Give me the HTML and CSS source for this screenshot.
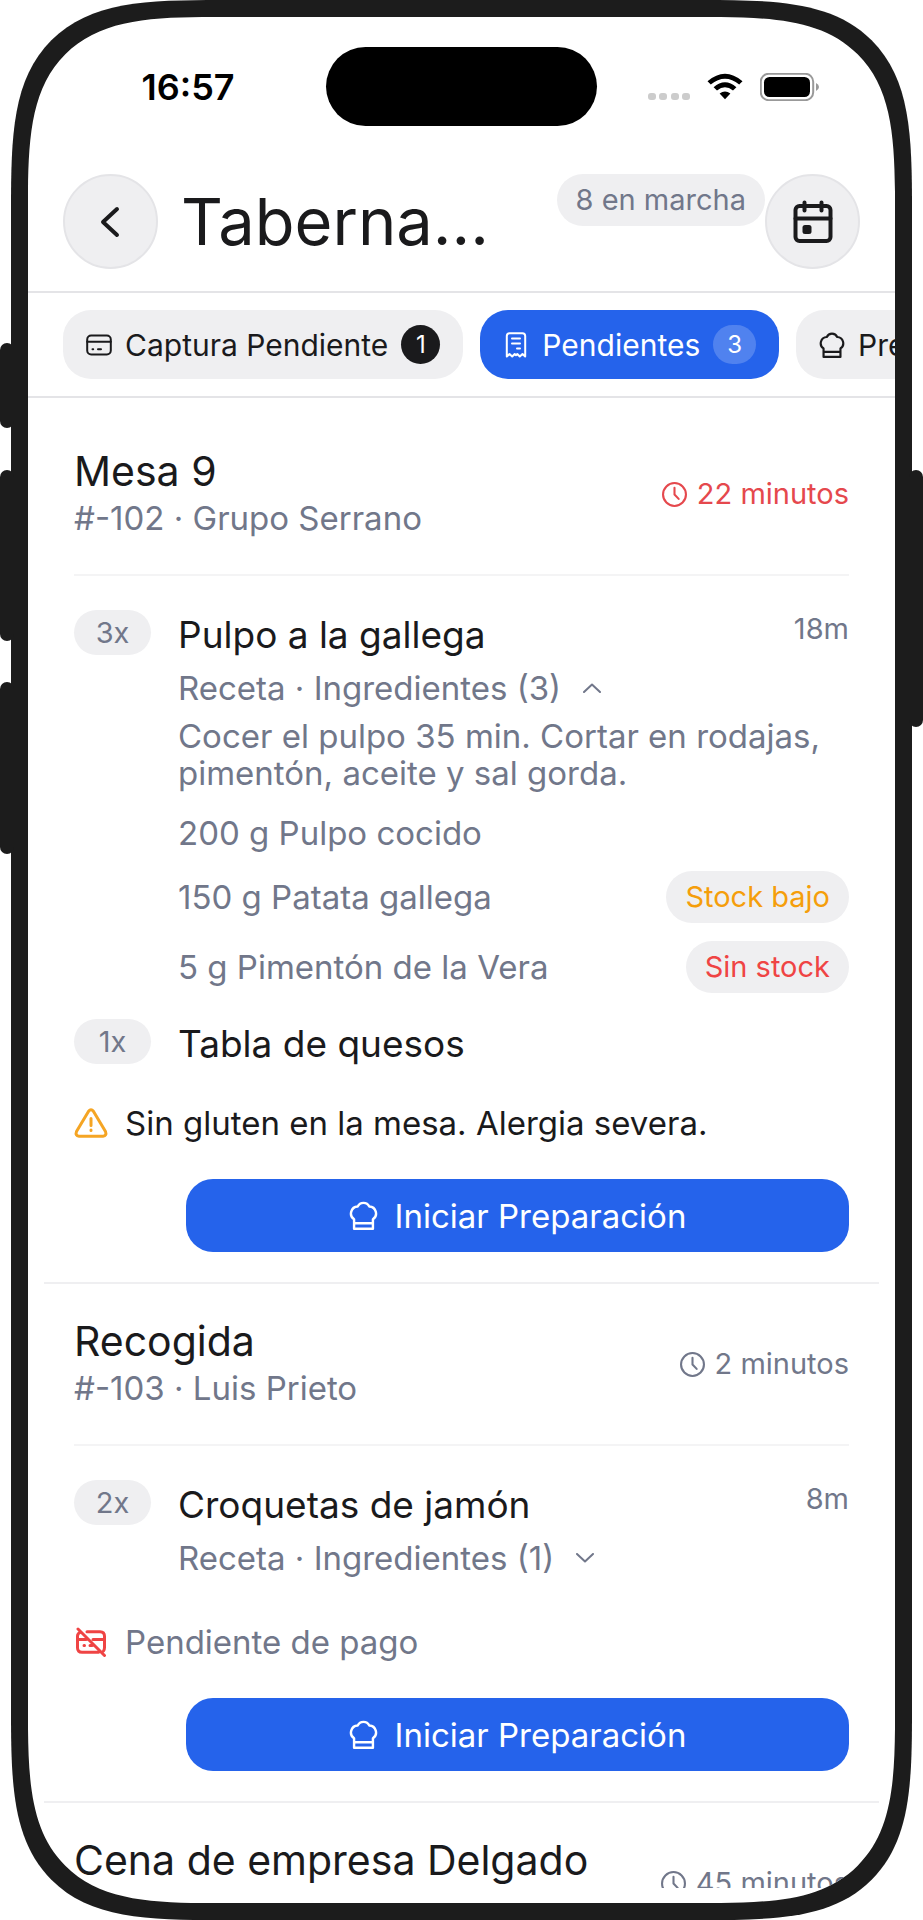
FILE: index.html
```html
<!DOCTYPE html>
<html lang="es">
<head>
	<meta charset="utf-8" />
	<meta name="viewport" content="width=device-width, initial-scale=1" />
	<title>Taberna - Pedidos</title>
	<link rel="stylesheet" href="styles.css">
</head>
<body>
	<!-- shared icons -->
	<svg class="sprite" aria-hidden="true">
		<symbol id="i-hat" viewBox="0 0 24 24">
			<path d="M4.2 15.2A5.8 5.8 0 0 1 7.2 4.6A5.3 5.3 0 0 1 16.8 4.6A5.8 5.8 0 0 1 19.8 15.2V23H4.2ZM4.2 18.4H19.8" />
		</symbol>
		<symbol id="i-clock" viewBox="0 0 24 24">
			<circle cx="12" cy="12" r="11" /><path d="M12 5.5V12L16 16.2" />
		</symbol>
	</svg>

	<div class="device">
		<span class="side side-mute"></span>
		<span class="side side-up"></span>
		<span class="side side-down"></span>
		<span class="side side-power"></span>

		<div class="screen">
			<div class="status">
				<span class="status-time">16:57</span>
				<span class="island"></span>
				<span class="status-icons">
					<svg width="42" height="8" viewBox="0 0 42 8" class="dots"><rect width="8" height="7" rx="3" /><rect x="11" width="8" height="7" rx="3" /><rect x="23" width="8" height="7" rx="3" /><rect x="34" width="8" height="7" rx="3" /></svg>
					<svg width="36" height="27" viewBox="0 0 36 27"><path d="M.5 8.2Q18-6.8 35.5 8.2L32.2 11.5Q18-.2 3.8 11.5Z" /><path d="M6.6 14.2Q18 4.4 29.4 14.2L26 17.5Q18 11.2 10 17.5Z" /><path d="M12.6 20.5Q18 16.3 23.4 20.5L18 26.3Z" /></svg>
					<svg width="60" height="28" viewBox="0 0 60 28"><rect x=".8" y=".8" width="52.4" height="26.4" rx="8" class="battery-case" /><rect x="4" y="4" width="46" height="20" rx="5.5" /><path d="M56 10V18Q59 16.5 59 14T56 10Z" fill="#999" /></svg>
				</span>
			</div>

			<header class="top">
				<button class="round" aria-label="Volver">
					<svg width="32" height="32" viewBox="0 0 32 32"><path d="M22 3L8 16L22 29" stroke-width="4" /></svg>
				</button>
				<h1>Taberna...</h1>
				<span class="pill">8 en marcha</span>
				<button class="round" aria-label="Calendario">
					<svg width="40" height="44" viewBox="0 0 40 44"><rect x="2.5" y="6" width="35" height="35" rx="4" stroke-width="4" /><path d="M2.5 18.5H37.5M11.5 2.5V10.5M28.5 2.5V10.5" stroke-width="4" /><rect x="9.5" y="25" width="9" height="9" rx="2.5" fill="currentColor" stroke="none" /></svg>
				</button>
			</header>

			<nav class="tabs">
				<button class="tab">
					<svg width="26" height="26" viewBox="0 0 26 26"><rect x="1.2" y="3.5" width="23.6" height="19" rx="4" /><path d="M1.2 9.8H24.8M6.5 17.2H7.2M12 17.2H15" /></svg>
					Captura Pendiente
					<span class="count">1</span>
				</button>
				<button class="tab active">
					<svg width="26" height="26" viewBox="0 0 26 26"><path d="M3.8 24.5V4Q3.8 1.2 6.6 1.2H19.4Q22.2 1.2 22.2 4V24.5L19.5 22L16.8 24.5L14.3 22L13 23.2L11.7 22L9.2 24.5L6.5 22ZM9 6.5H17M9 11.5H17M14 16.5H17" /></svg>
					Pendientes
					<span class="count">3</span>
				</button>
				<button class="tab">
					<svg width="26" height="26"><use href="#i-hat" /></svg>
					Preparando
				</button>
			</nav>

			<main class="orders">
				<article class="order">
					<div class="order-head">
						<div class="order-name">
							<h2>Mesa 9</h2>
							<p>#-102 · Grupo Serrano</p>
						</div>
						<span class="wait late"><svg width="25" height="25"><use href="#i-clock" /></svg>22 minutos</span>
					</div>
					<div class="items">
						<div class="item">
							<span class="qty">3x</span>
							<div class="item-body">
								<div class="item-line"><h3>Pulpo a la gallega</h3><span class="mins">18m</span></div>
								<button class="recipe" aria-expanded="true">Receta · Ingredientes (3) <svg width="18" height="10" viewBox="0 0 18 10"><path d="M1 9L9 1.5L17 9" /></svg></button>
								<p class="steps">Cocer el pulpo 35 min. Cortar en rodajas, pimentón, aceite y sal gorda.</p>
								<ul class="stock">
									<li>200 g Pulpo cocido</li>
									<li>150 g Patata gallega <span class="pill low">Stock bajo</span></li>
									<li>5 g Pimentón de la Vera <span class="pill out">Sin stock</span></li>
								</ul>
							</div>
						</div>
						<div class="item">
							<span class="qty">1x</span>
							<div class="item-body"><h3>Tabla de quesos</h3></div>
						</div>
					</div>
					<p class="note">
						<svg class="warn" width="34" height="30" viewBox="0 0 34 30"><path d="M14.6 3.2Q17 .2 19.4 3.2L31.5 23.5Q33 27.8 29 28.2H5Q1 27.8 2.5 23.5ZM17 10.5V17.5M17 22V22.5" /></svg>
						Sin gluten en la mesa. Alergia severa.
					</p>
					<button class="start"><svg width="29" height="29"><use href="#i-hat" /></svg>Iniciar Preparación</button>
				</article>

				<article class="order">
					<div class="order-head">
						<div class="order-name">
							<h2>Recogida</h2>
							<p>#-103 · Luis Prieto</p>
						</div>
						<span class="wait"><svg width="25" height="25"><use href="#i-clock" /></svg>2 minutos</span>
					</div>
					<div class="items">
						<div class="item">
							<span class="qty">2x</span>
							<div class="item-body">
								<div class="item-line"><h3>Croquetas de jamón</h3><span class="mins">8m</span></div>
								<button class="recipe" aria-expanded="false">Receta · Ingredientes (1) <svg width="18" height="10" viewBox="0 0 18 10"><path d="M1 1L9 8.5L17 1" /></svg></button>
							</div>
						</div>
					</div>
					<p class="note unpaid">
						<svg width="34" height="30" viewBox="0 0 34 30"><path d="M13 4.8H26Q30.5 4.8 30.5 9.3V20.5Q30.5 22.5 29.5 24M24.5 25.2H8Q3.5 25.2 3.5 20.7V9.3Q3.5 6.5 6 5.3M3.5 12.5H12M19 12.5H30.5M10 18.5H10.5M16 18.5H18M4 2L30.5 28.5" /></svg>
						Pendiente de pago
					</p>
					<button class="start"><svg width="29" height="29"><use href="#i-hat" /></svg>Iniciar Preparación</button>
				</article>

				<article class="order">
					<div class="order-head">
						<div class="order-name">
							<h2>Cena de empresa Delgado</h2>
						</div>
						<span class="wait"><svg width="25" height="25"><use href="#i-clock" /></svg>45 minutos</span>
					</div>
				</article>
			</main>
		</div>
	</div>
</body>
</html>
```
FILE: styles.css
```css
* { box-sizing: border-box; }
body {
	margin: 0;
	background: #fff;
	color: #1a1a1c;
	font-family: Inter, "Liberation Sans", sans-serif;
	font-size: 33px;
}
h1, h2, h3, p, ul { margin: 0; padding: 0; font-weight: 400; }
ul { list-style: none; }
button {
	font: inherit;
	color: inherit;
	border: 0;
	padding: 0;
	background: none;
}
svg {
	flex: none;
	fill: none;
	stroke: currentColor;
	stroke-width: 2;
	stroke-linecap: round;
	stroke-linejoin: round;
}
.sprite { position: absolute; width: 0; height: 0; }

/* phone */
.device {
	position: relative;
	height: 100vh;
	padding: 0 11px;
}
.screen {
	display: flex;
	flex-direction: column;
	height: 100%;
	overflow: hidden;
	padding-bottom: 15px;
	border: 17px solid #1c1c1c;
	border-radius: 140px;
	background: #fff;
}
@supports (corner-shape: squircle) {
	.screen { border-radius: 210px; corner-shape: superellipse(1.7); }
}
.side {
	position: absolute;
	width: 14px;
	background: #1c1c1c;
	border-radius: 7px;
}
.side-mute { left: 0; top: 343px; height: 85px; }
.side-up { left: 0; top: 470px; height: 171px; }
.side-down { left: 0; top: 682px; height: 172px; }
.side-power { right: 0; top: 470px; height: 257px; }

.status {
	display: grid;
	grid-template-columns: 1fr 271px 1fr;
	align-items: center;
	padding-top: 30px;
	color: #000;
}
.status-time {
	padding-left: 22px;
	text-align: center;
	font-size: 36px;
	font-weight: 600;
}
.island {
	height: 79px;
	border-radius: 40px;
	background: #000;
}
.status-icons {
	display: flex;
	align-items: center;
	justify-content: flex-end;
	gap: 17px;
	padding-right: 75px;
}
.status-icons svg { fill: #000; stroke: none; }
.status-icons .dots { fill: #ccc; align-self: flex-end; }
.status-icons .battery-case { fill: none; stroke: #999; }

.top {
	display: flex;
	align-items: center;
	margin-top: 48px;
	padding: 0 35px 22px;
	border-bottom: 2px solid #e4e4e7;
}
.top h1 {
	flex: 1;
	padding-left: 23px;
	font-size: 65px;
	line-height: 80px;
}
.top .pill { align-self: flex-start; }
.round {
	display: grid;
	place-items: center;
	width: 95px;
	height: 95px;
	border: 2px solid #e4e4e7;
	border-radius: 50%;
	background: #efeff1;
}
.pill {
	padding: 0 19px;
	border-radius: 26px;
	background: #efeff1;
	color: #71778a;
	font-size: 29px;
	line-height: 52px;
	white-space: nowrap;
}
.low { color: #f59e0b; }
.out { color: #ef4444; }

.tabs {
	display: flex;
	gap: 17px;
	padding: 17px 0 17px 35px;
	border-bottom: 2px solid #e4e4e7;
	overflow: hidden;
}
.tab {
	display: flex;
	flex: none;
	align-items: center;
	gap: 13px;
	height: 69px;
	padding: 0 23px;
	border-radius: 28px;
	background: #efeff1;
	font-size: 30px;
}
.tab.active { background: #2563eb; color: #fff; }
.count {
	min-width: 39px;
	padding: 0 14px;
	border-radius: 20px;
	background: #1a1a1c;
	color: #fff;
	font-size: 24px;
	line-height: 39px;
}
.active .count { background: rgba(255, 255, 255, 0.2); }

/* orders */
.orders {
	flex: 1;
	min-height: 0;
	overflow: hidden;
	padding: 16px 16px 0;
}
.order {
	padding: 0 30px 30px;
	border-bottom: 2px solid #efeff1;
}
.order-head {
	display: flex;
	align-items: center;
	justify-content: space-between;
	padding: 33px 0;
	border-bottom: 2px solid #f4f4f5;
}
.order-name { min-height: 94px; }
.order-name h2 { font-size: 41px; line-height: 48px; }
.order-name p { color: #71778a; line-height: 46px; }
.wait, .mins { color: #71778a; font-size: 29px; line-height: 38px; }
.wait { display: flex; align-items: center; gap: 10px; }
.wait.late { color: #e5484d; }

.items {
	display: flex;
	flex-direction: column;
	gap: 26px;
	padding-top: 34px;
}
.item {
	display: flex;
	align-items: flex-start;
	gap: 27px;
}
.qty {
	width: 77px;
	border-radius: 23px;
	background: #efeff1;
	color: #71778a;
	font-size: 29px;
	line-height: 45px;
	text-align: center;
}
.item-body { flex: 1; }
.item-line { display: flex; justify-content: space-between; }
.item h3 { font-size: 37px; line-height: 50px; }
.recipe {
	display: flex;
	align-items: center;
	gap: 22px;
	margin-bottom: 2px;
	color: #71778a;
	line-height: 56px;
}
.steps { color: #71778a; line-height: 37px; }
.stock {
	display: flex;
	flex-direction: column;
	gap: 18px;
	margin-top: 21px;
	color: #71778a;
	line-height: 40px;
}
.stock li { display: flex; align-items: center; justify-content: space-between; }
.note {
	display: flex;
	align-items: center;
	gap: 17px;
	margin: 34px 0 36px;
	line-height: 40px;
}
.note svg { color: #ef4444; stroke-width: 3; }
.note .warn { color: #f5a524; }
.unpaid { color: #71778a; }
.start {
	display: flex;
	align-items: center;
	justify-content: center;
	gap: 17px;
	width: calc(100% - 112px);
	height: 73px;
	margin-left: 112px;
	border-radius: 27px;
	background: #2563eb;
	color: #fff;
}
```
